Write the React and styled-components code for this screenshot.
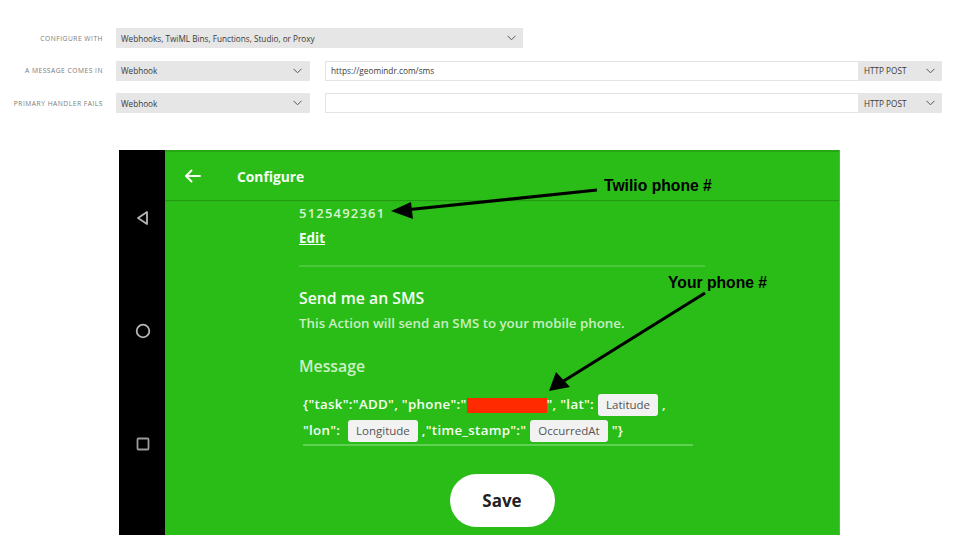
import React from "react";
import styled, { createGlobalStyle } from "styled-components";

const Global = createGlobalStyle`
  html, body { margin: 0; padding: 0; background: #fff; }
  body { font-family: "Open Sans", sans-serif; }
`;

const Page = styled.div`
  position: relative;
  width: 960px;
  height: 540px;
  overflow: hidden;
  background: #fff;
`;

const Form = styled.div`
  display: flex;
  flex-direction: column;
  gap: 12.5px;
  padding-top: 28px;
`;

const Row = styled.div`
  display: flex;
  align-items: center;
  height: 20px;
`;

const Label = styled.div`
  width: 103px;
  margin-right: 13px;
  text-align: right;
  font-family: "Open Sans", sans-serif;
  font-size: 6.7px;
  letter-spacing: 0.5px;
  color: #7a7a7a;
  text-transform: uppercase;
`;

const Select = styled.div`
  box-sizing: border-box;
  width: ${(p) => p.w}px;
  height: 20px;
  background: #e6e6e6;
  display: flex;
  align-items: center;
  justify-content: space-between;
  padding: 0 ${(p) => p.pr || 8}px 0 5px;
  font-size: 8.2px;
  color: #3a3a3a;
  font-family: "Open Sans", sans-serif;
`;

const Input = styled.div`
  box-sizing: border-box;
  margin-left: 15px;
  width: 533px;
  height: 20px;
  background: #fff;
  border: 1px solid #e3e3e3;
  border-right: none;
  display: flex;
  align-items: center;
  padding-left: 5px;
  font-size: 8.3px;
  color: #3a3a3a;
`;

const Method = styled(Select)`
  font-size: 8.2px;
  padding-left: 6px;
`;

const Chevron = () => (
  <svg width="9" height="6" viewBox="0 0 9 6">
    <path d="M0.5 0.8 L4.5 4.8 L8.5 0.8" fill="none" stroke="#555" strokeWidth="1" />
  </svg>
);

const Phone = styled.div`
  display: flex;
  margin: 37px 0 0 119px;
  width: 721px;
  height: 385px;
`;

const NavBar = styled.div`
  width: 47px;
  background: #000;
  display: flex;
  flex-direction: column;
  align-items: center;
  padding: 60px 0 0 2px;
  box-sizing: border-box;
  gap: 97px;
`;

const Screen = styled.div`
  flex: 1;
  background: #2abd17;
  display: flex;
  flex-direction: column;
  border-right: 1px solid #3fcb2e;
`;

const Header = styled.div`
  height: 48px;
  display: flex;
  align-items: center;
  border-top: 2px solid #26a814;
  box-shadow: 0 1px 1px rgba(0, 0, 0, 0.18);
  padding-left: 19px;
  gap: 36px;
`;

const HeaderTitle = styled.div`
  font-family: "Open Sans", sans-serif;
  font-weight: 700;
  font-size: 13.8px;
  color: #f4fff2;
`;

const Body = styled.div`
  display: flex;
  flex-direction: column;
  padding-left: 134px;
  padding-top: 5px;
`;

const Number = styled.div`
  font-family: "Open Sans", sans-serif;
  font-weight: 600;
  font-size: 13px;
  color: #d7f4d0;
  letter-spacing: 1.2px;
  line-height: 16px;
`;

const EditLink = styled.div`
  margin-top: 9px;
  font-family: "Open Sans", sans-serif;
  font-weight: 700;
  font-size: 13.5px;
  color: #f4fff2;
  text-decoration: underline;
  line-height: 16px;
`;

const Divider = styled.div`
  margin-top: 19px;
  width: 406px;
  height: 2px;
  background: #49c83a;
`;

const Title = styled.div`
  margin-top: 21px;
  font-family: "Open Sans", sans-serif;
  font-weight: 600;
  font-size: 15.8px;
  color: #f6fff4;
  line-height: 20px;
`;

const Sub = styled.div`
  margin-top: 7px;
  font-family: "Open Sans", sans-serif;
  font-weight: 600;
  font-size: 13.3px;
  color: #c9efc2;
  line-height: 16px;
`;

const MsgLabel = styled(Title)`
  margin-top: 25px;
  color: #cdf0c6;
`;

const Message = styled.div`
  margin-top: 15px;
  margin-left: 4px;
  width: 390px;
  border-bottom: 2px solid #5fd051;
  padding-bottom: 1px;
  font-family: "Open Sans", sans-serif;
  font-weight: 600;
  font-size: 13.3px;
  letter-spacing: 0.3px;
  color: #f6fff4;
  line-height: 26px;
  white-space: nowrap;
`;

const Pill = styled.span`
  display: inline-block;
  background: #f2f2f2;
  color: #555;
  font-family: "Open Sans", sans-serif;
  font-weight: 400;
  font-size: 11.5px;
  letter-spacing: 0;
  line-height: 22px;
  height: 22px;
  padding: 0 8px;
  border-radius: 3px;
  vertical-align: middle;
  margin: 0 4px;
`;

const Redact = styled.span`
  display: inline-block;
  width: 80px;
  height: 15px;
  background: #ff2a00;
  vertical-align: middle;
`;

const SaveWrap = styled.div`
  display: flex;
  justify-content: center;
  margin-top: 28px;
  margin-left: -134px;
  width: 674px;
`;

const SaveButton = styled.div`
  width: 105px;
  height: 53px;
  border-radius: 27px;
  background: #fff;
  display: flex;
  align-items: center;
  justify-content: center;
  font-family: "Open Sans", sans-serif;
  font-weight: 700;
  font-size: 17px;
  color: #222;
`;

const Note = styled.div`
  position: absolute;
  left: ${(p) => p.x}px;
  top: ${(p) => p.y}px;
  font-family: "Liberation Sans", Arial, sans-serif;
  font-weight: 700;
  font-size: 15.7px;
  color: #000;
  white-space: nowrap;
`;

const Overlay = styled.svg`
  position: absolute;
  left: 0;
  top: 0;
  pointer-events: none;
`;

export default function App() {
  return (
    <Page>
      <Global />
      <Form>
        <Row>
          <Label>Configure with</Label>
          <Select w={407} pr={7}>
            <span>Webhooks, TwiML Bins, Functions, Studio, or Proxy</span>
            <Chevron />
          </Select>
        </Row>
        <Row>
          <Label>A message comes in</Label>
          <Select w={194}>
            <span>Webhook</span>
            <Chevron />
          </Select>
          <Input>https://geomindr.com/sms</Input>
          <Method w={84} pr={7}>
            <span>HTTP POST</span>
            <Chevron />
          </Method>
        </Row>
        <Row>
          <Label>Primary handler fails</Label>
          <Select w={194}>
            <span>Webhook</span>
            <Chevron />
          </Select>
          <Input />
          <Method w={84} pr={7}>
            <span>HTTP POST</span>
            <Chevron />
          </Method>
        </Row>
      </Form>

      <Phone>
        <NavBar>
          <svg width="16" height="16" viewBox="0 0 16 16">
            <path d="M12 2 L12 14 L3 8 Z" fill="none" stroke="#b5b5b5" strokeWidth="1.8" strokeLinejoin="round" />
          </svg>
          <svg width="16" height="16" viewBox="0 0 16 16">
            <circle cx="8" cy="8" r="6.3" fill="none" stroke="#b5b5b5" strokeWidth="1.8" />
          </svg>
          <svg width="16" height="16" viewBox="0 0 16 16">
            <rect x="2.5" y="2.5" width="11" height="11" rx="1" fill="none" stroke="#9a9a9a" strokeWidth="1.8" />
          </svg>
        </NavBar>
        <Screen>
          <Header>
            <svg width="17" height="14" viewBox="0 0 17 14">
              <path d="M16 7 H2 M7.5 1.5 L2 7 L7.5 12.5" fill="none" stroke="#f4fff2" strokeWidth="2" strokeLinecap="round" strokeLinejoin="round" />
            </svg>
            <HeaderTitle>Configure</HeaderTitle>
          </Header>
          <Body>
            <Number>5125492361</Number>
            <EditLink>Edit</EditLink>
            <Divider />
            <Title>Send me an SMS</Title>
            <Sub>This Action will send an SMS to your mobile phone.</Sub>
            <MsgLabel>Message</MsgLabel>
            <Message>
              {'{"task":"ADD", "phone":"'}
              <Redact />
              {'", "lat":'}
              <Pill>Latitude</Pill>
              {","}
              <br />
              {'"lon": '}
              <Pill>Longitude</Pill>
              {',"time_stamp":"'}
              <Pill>OccurredAt</Pill>
              {'"}'}
            </Message>
            <SaveWrap>
              <SaveButton>Save</SaveButton>
            </SaveWrap>
          </Body>
        </Screen>
      </Phone>

      <Note x={604} y={177}>Twilio phone #</Note>
      <Note x={668} y={274}>Your phone #</Note>
      <Overlay width="960" height="540" viewBox="0 0 960 540">
        <line x1="597" y1="190" x2="405" y2="210" stroke="#000" strokeWidth="3.2" />
        <polygon points="391,211 411,202 413,219" fill="#000" />
        <line x1="705" y1="293" x2="562" y2="382" stroke="#000" strokeWidth="3.2" />
        <polygon points="549,391 556,372 570,387" fill="#000" />
      </Overlay>
    </Page>
  );
}
